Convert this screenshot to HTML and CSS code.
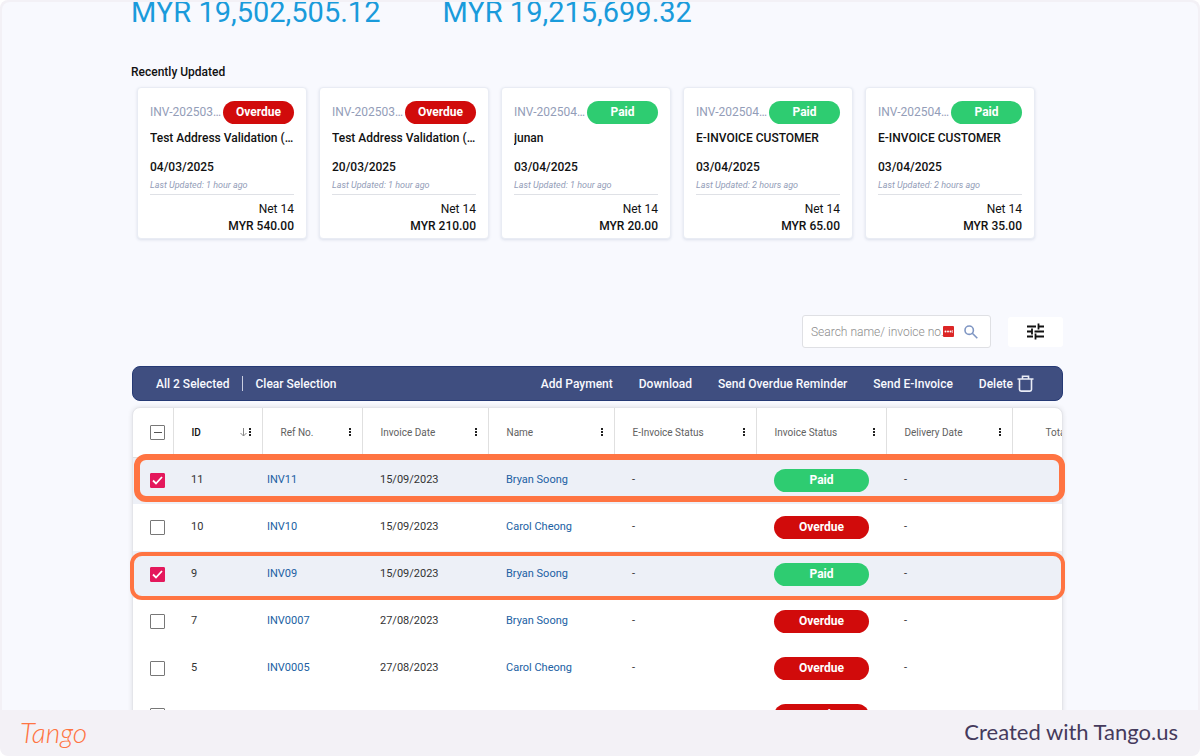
FILE: index.html
```
<!DOCTYPE html>
<html lang="en">
<head>
    <meta charset="utf-8">
    <title>Invoices</title>
    <link rel="stylesheet" href="styles.css">
</head>
<body>
<div class="frame">
    <main class="screen">
        <div class="totals">
            <div class="total">MYR 19,502,505.12</div>
            <div class="total">MYR 19,215,699.32</div>
        </div>

        <h2 class="section-title">Recently Updated</h2>
        <div class="cards">
            <div class="card">
                <div class="card-top"><span class="card-no">INV-20250304-01</span><span class="pill overdue">Overdue</span></div>
                <div class="card-name">Test Address Validation (Billing)</div>
                <div class="card-date">04/03/2025</div>
                <div class="card-updated">Last Updated: 1 hour ago</div>
                <div class="card-net">Net 14</div>
                <div class="card-amount">MYR 540.00</div>
            </div>
            <div class="card">
                <div class="card-top"><span class="card-no">INV-20250320-01</span><span class="pill overdue">Overdue</span></div>
                <div class="card-name">Test Address Validation (Billing)</div>
                <div class="card-date">20/03/2025</div>
                <div class="card-updated">Last Updated: 1 hour ago</div>
                <div class="card-net">Net 14</div>
                <div class="card-amount">MYR 210.00</div>
            </div>
            <div class="card">
                <div class="card-top"><span class="card-no">INV-20250403-01</span><span class="pill paid">Paid</span></div>
                <div class="card-name">junan</div>
                <div class="card-date">03/04/2025</div>
                <div class="card-updated">Last Updated: 1 hour ago</div>
                <div class="card-net">Net 14</div>
                <div class="card-amount">MYR 20.00</div>
            </div>
            <div class="card">
                <div class="card-top"><span class="card-no">INV-20250403-02</span><span class="pill paid">Paid</span></div>
                <div class="card-name">E-INVOICE CUSTOMER</div>
                <div class="card-date">03/04/2025</div>
                <div class="card-updated">Last Updated: 2 hours ago</div>
                <div class="card-net">Net 14</div>
                <div class="card-amount">MYR 65.00</div>
            </div>
            <div class="card">
                <div class="card-top"><span class="card-no">INV-20250403-03</span><span class="pill paid">Paid</span></div>
                <div class="card-name">E-INVOICE CUSTOMER</div>
                <div class="card-date">03/04/2025</div>
                <div class="card-updated">Last Updated: 2 hours ago</div>
                <div class="card-net">Net 14</div>
                <div class="card-amount">MYR 35.00</div>
            </div>
        </div>

        <div class="search-row">
            <div class="search-box">
                <input type="text" class="search-input" placeholder="Search name/ invoice no." aria-label="Search name or invoice number">
                <svg class="pass-icon" width="11" height="11" viewBox="0 0 11 11"><rect width="11" height="11" rx="1" fill="#dc2626"/><circle cx="2.5" cy="5.5" r="1" fill="#fff"/><circle cx="5" cy="5.5" r="1" fill="#fff"/><circle cx="7.5" cy="5.5" r="1" fill="#fff"/><path d="M9.3 4v3" stroke="#fff" stroke-width=".7"/></svg>
                <button class="search-btn" aria-label="Search">
                    <svg width="14" height="14" viewBox="0 0 14 14" fill="none" stroke="#7f96c3" stroke-width="1.6"><circle cx="5.2" cy="5.2" r="4.2"/><path d="M8.3 8.3l5 5"/></svg>
                </button>
            </div>
            <button class="filter-btn" aria-label="Filter">
                <svg width="17" height="17" viewBox="0 0 17 17" fill="none" stroke="#111" stroke-width="1.8"><path d="M0 3.5h9M11.5 3.5H17M11.5 0.5v6M0 8.5h5M7.5 8.5H17M5 5.5v6M0 13.5h6M8.5 13.5H17M8.5 10.5v6"/></svg>
            </button>
        </div>

        <div class="toolbar">
            <button class="tool">All 2 Selected</button>
            <span class="divider"></span>
            <button class="tool">Clear Selection</button>
            <div class="actions">
                <button class="tool">Add Payment</button>
                <button class="tool">Download</button>
                <button class="tool">Send Overdue Reminder</button>
                <button class="tool">Send E-Invoice</button>
                <button class="tool delete">Delete
                    <svg width="17" height="17" viewBox="0 0 17 17" fill="none" stroke="#e9ecf5" stroke-width="1.6"><path d="M0.5 4h16M5.5 4V1.2h6V4M2.5 4v10.5q0 1.6 1.6 1.6h8.8q1.6 0 1.6-1.6V4"/></svg>
                </button>
            </div>
        </div>

        <div class="grid-area">
            <div class="grid">
                <table>
                    <colgroup>
                        <col class="c-check"><col class="c-id"><col class="c-ref"><col class="c-date"><col class="c-name"><col class="c-einv"><col class="c-status"><col class="c-delivery"><col class="c-total">
                    </colgroup>
                    <thead>
                        <tr>
                            <th><input type="checkbox" class="check partial" aria-label="Select all"></th>
                            <th class="sorted"><div class="head"><span>ID</span><svg class="sort" width="7" height="9" viewBox="0 0 7 9" fill="none" stroke="#888"><path d="M3.5 0v8M.5 5l3 3 3-3"/></svg><i class="dots"></i></div></th>
                            <th><div class="head"><span>Ref No.</span><i class="dots"></i></div></th>
                            <th><div class="head"><span>Invoice Date</span><i class="dots"></i></div></th>
                            <th><div class="head"><span>Name</span><i class="dots"></i></div></th>
                            <th><div class="head"><span>E-Invoice Status</span><i class="dots"></i></div></th>
                            <th><div class="head"><span>Invoice Status</span><i class="dots"></i></div></th>
                            <th><div class="head"><span>Delivery Date</span><i class="dots"></i></div></th>
                            <th class="total-head">Total</th>
                        </tr>
                    </thead>
                    <tbody>
                        <tr class="selected">
                            <td><input type="checkbox" class="check" aria-label="Select 11" checked></td><td>11</td><td class="ref"><a href="#">INV11</a></td><td>15/09/2023</td><td><a href="#">Bryan Soong</a></td><td>-</td><td class="status"><span class="pill paid">Paid</span></td><td>-</td><td></td>
                        </tr>
                        <tr>
                            <td><input type="checkbox" class="check" aria-label="Select 10"></td><td>10</td><td class="ref"><a href="#">INV10</a></td><td>15/09/2023</td><td><a href="#">Carol Cheong</a></td><td>-</td><td class="status"><span class="pill overdue">Overdue</span></td><td>-</td><td></td>
                        </tr>
                        <tr class="selected">
                            <td><input type="checkbox" class="check" aria-label="Select 9" checked></td><td>9</td><td class="ref"><a href="#">INV09</a></td><td>15/09/2023</td><td><a href="#">Bryan Soong</a></td><td>-</td><td class="status"><span class="pill paid">Paid</span></td><td>-</td><td></td>
                        </tr>
                        <tr>
                            <td><input type="checkbox" class="check" aria-label="Select 7"></td><td>7</td><td class="ref"><a href="#">INV0007</a></td><td>27/08/2023</td><td><a href="#">Bryan Soong</a></td><td>-</td><td class="status"><span class="pill overdue">Overdue</span></td><td>-</td><td></td>
                        </tr>
                        <tr>
                            <td><input type="checkbox" class="check" aria-label="Select 5"></td><td>5</td><td class="ref"><a href="#">INV0005</a></td><td>27/08/2023</td><td><a href="#">Carol Cheong</a></td><td>-</td><td class="status"><span class="pill overdue">Overdue</span></td><td>-</td><td></td>
                        </tr>
                        <tr>
                            <td><input type="checkbox" class="check" aria-label="Select 4"></td><td>4</td><td class="ref"><a href="#">INV0004</a></td><td>27/08/2023</td><td><a href="#">Bryan Soong</a></td><td>-</td><td class="status"><span class="pill overdue">Overdue</span></td><td>-</td><td></td>
                        </tr>
                    </tbody>
                </table>
            </div>
            <!-- highlight boxes over the selected rows -->
            <div class="highlight first"></div>
            <div class="highlight second"></div>
        </div>
    </main>

    <footer class="footer">
        <span class="brand">Tango</span>
        <span class="credit">Created with Tango.us</span>
    </footer>
</div>
</body>
</html>
```
FILE: styles.css
```
* {
    box-sizing: border-box;
}

body {
    margin: 0;
    background: #fff;
    font-family: Roboto, "Liberation Sans", sans-serif;
    color: #111;
}

button {
    font: inherit;
    color: inherit;
    border: 0;
    padding: 0;
    background: none;
    cursor: pointer;
}

.frame {
    display: flex;
    flex-direction: column;
    height: 100vh;
    padding: 2px 2px 0;
    background: #f3f1f6;
    border-radius: 8px;
    overflow: hidden;
}

.screen {
    flex: 1;
    min-height: 0;
    overflow: hidden;
    padding: 0 135px 0 129px;
    background: #f8f9fe;
    border-radius: 8px 8px 0 0;
}

/* totals */
.totals {
    display: flex;
    gap: 62px;
    margin-top: -10px;
    font-size: 29px;
    line-height: 40px;
    font-weight: 400;
    color: #1a9bdb;
}

.section-title {
    margin: 30px 0 0;
    font-size: 12px;
    line-height: 20px;
    font-weight: 500;
}

/* invoice cards */
.cards {
    display: grid;
    grid-template-columns: repeat(5, 1fr);
    gap: 12px;
    margin: 5px 28px 0 6px;
}

.card {
    min-width: 0;
    padding: 13px 12px 3px;
    background: #fff;
    border: 1px solid #e9ecf4;
    border-radius: 4px;
    box-shadow: 0 1px 3px rgba(60, 80, 130, 0.15);
    font-size: 12px;
    line-height: 17px;
}

.card-top {
    display: flex;
    align-items: center;
    height: 23px;
}

.card-no {
    flex: 1;
    min-width: 0;
    color: #939db8;
}

.card-no,
.card-name {
    overflow: hidden;
    white-space: nowrap;
    text-overflow: ellipsis;
}

.card-name {
    margin-top: 6px;
    margin-right: -6px;
    font-weight: 500;
}

.card-date {
    margin-top: 12px;
    font-weight: 500;
}

.card-updated {
    border-bottom: 1px solid #dfe1e6;
    font-size: 9px;
    line-height: 18px;
    font-style: italic;
    color: #939db8;
}

.card-net {
    margin-top: 6px;
    text-align: right;
}

.card-amount {
    text-align: right;
    font-weight: 500;
}

.pill {
    display: block;
    width: 71px;
    border-radius: 12px;
    font-size: 12px;
    line-height: 23px;
    font-weight: 700;
    text-align: center;
    color: #fff;
}

.paid {
    background: #2ecc71;
}

.overdue {
    background: #d10b0b;
}

/* search */
.search-row {
    display: flex;
    justify-content: flex-end;
    align-items: center;
    gap: 17px;
    margin-top: 76px;
}

.search-box {
    display: flex;
    align-items: center;
    width: 189px;
    height: 33px;
    padding: 0 12px 0 8px;
    background: #fff;
    border: 1px solid #dfe0e4;
    border-radius: 3px;
}

.search-input {
    width: 136px;
    padding: 0;
    border: 0;
    outline: 0;
    background: none;
    font: 12px Roboto, sans-serif;
}

.search-input::placeholder {
    color: #8c8c8c;
    font-weight: 300;
}

.pass-icon {
    flex: none;
    margin-left: -4px;
}

.search-btn {
    display: flex;
    margin-left: auto;
}

.filter-btn {
    display: flex;
    align-items: center;
    justify-content: center;
    width: 55px;
    height: 30px;
    background: #fff;
    border-radius: 3px;
}

/* selection toolbar */
.toolbar {
    display: flex;
    align-items: center;
    height: 35px;
    margin: 18px 0 0 1px;
    padding: 0 28px 0 23px;
    background: #3f4e80;
    border: 1px solid #263a75;
    border-radius: 8px;
    font-size: 12px;
    font-weight: 500;
    color: #f8f9fe;
}

.divider {
    width: 1px;
    height: 15px;
    margin: 0 13px 0 12px;
    background: #c9cee0;
}

.actions {
    display: flex;
    align-items: center;
    gap: 26px;
    margin-left: auto;
}

.delete {
    display: flex;
    align-items: center;
    gap: 4px;
}

/* invoice table */
.grid-area {
    position: relative;
    margin: 6px 0 0 1px;
}

.grid {
    overflow: hidden;
    background: #fff;
    border: 1px solid #e4e5ea;
    border-radius: 8px;
    box-shadow: 0 0 5px rgba(0, 0, 0, 0.1);
}

table {
    width: 1006px;
    min-width: 100%;
    table-layout: fixed;
    border-collapse: collapse;
    font-size: 11px;
}

.c-check { width: 40px; }
.c-id { width: 89px; }
.c-ref { width: 100px; }
.c-date, .c-name, .c-delivery { width: 126px; }
.c-einv { width: 142px; }
.c-status { width: 130px; }

th {
    height: 49px;
    padding: 0 11px 0 18px;
    border-right: 1px solid #e0e0e0;
    border-bottom: 1px solid #e0e0e0;
    font-size: 10px;
    font-weight: 400;
    text-align: left;
    color: #616161;
}

.sorted {
    font-weight: 500;
    color: #111;
}

th.total-head {
    padding-left: 33px;
}

td {
    height: 47px;
    padding: 0 18px 2px;
    color: #333;
}

th:first-child,
td:first-child {
    padding: 0 0 0 17px;
}

td.ref {
    padding-left: 5px;
}

td.status {
    padding: 0 18px;
}

.selected {
    background: #edf0f7;
}

a {
    color: #215fa3;
    text-decoration: none;
}

td .pill {
    width: 95px;
}

.head {
    display: flex;
    align-items: center;
}

.sort {
    margin-left: auto;
}

.dots {
    width: 2px;
    height: 8px;
    margin-left: auto;
    background: repeating-linear-gradient(#222 0 2px, transparent 2px 3px);
}

.sort + .dots {
    margin-left: 2px;
}

.check {
    display: block;
    appearance: none;
    width: 15px;
    height: 15px;
    margin: 0;
    border: 1px solid #777;
    border-radius: 1px;
    background: #fff center no-repeat;
}

.check:checked {
    border-color: #e4185c;
    background-color: #e4185c;
    background-image: url("data:image/svg+xml,%3Csvg xmlns='http://www.w3.org/2000/svg' width='13' height='13' fill='none' stroke='white' stroke-width='1.8'%3E%3Cpath d='M2 6.5l3 3 6-6.5'/%3E%3C/svg%3E");
}

.partial {
    background-image: linear-gradient(#555, #555);
    background-size: 8px 1px;
}

.highlight {
    position: absolute;
    height: 48px;
    border: 6px solid #ff7442;
    border-radius: 12px;
    pointer-events: none;
}

.first {
    top: 47px;
    left: 2px;
    right: -2px;
}

.second {
    top: 145px;
    left: -2px;
    right: -2px;
    border-width: 4px;
}

/* footer */
.footer {
    display: flex;
    align-items: center;
    justify-content: space-between;
    height: 46px;
    padding: 0 20px 3px 18px;
    font-family: Lato, sans-serif;
}

.brand {
    font-size: 28px;
    font-style: italic;
    font-weight: 300;
    color: #ff7442;
}

.credit {
    font-size: 22px;
    color: #453a5c;
}
```
